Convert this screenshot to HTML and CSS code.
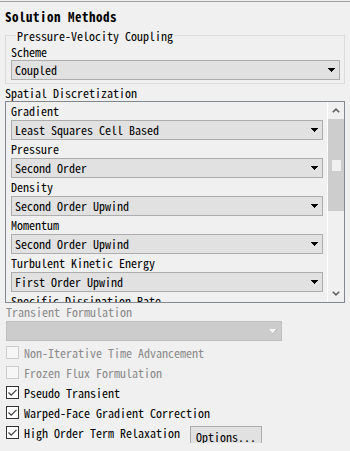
FILE: index.html
```html
<!DOCTYPE html>
<html lang="en">
<head>
<meta charset="UTF-8" />
<title>Solution Methods</title>
<link rel="stylesheet" href="styles.css">
</head>
<body>
<div class="rule"></div>
<div class="title">Solution Methods</div>

<fieldset class="group">
  <legend>Pressure-Velocity Coupling</legend>
  <div class="field-label tight">Scheme</div>
  <div class="combo">
    <span>Coupled</span>
    <svg class="arrow" width="7" height="4" viewBox="0 0 7 4" shape-rendering="crispEdges"><rect x="0" y="0" width="7" height="1"/><rect x="1" y="1" width="5" height="1"/><rect x="2" y="2" width="3" height="1"/><rect x="3" y="3" width="1" height="1"/></svg>
  </div>
</fieldset>

<div class="section-label">Spatial Discretization</div>
<div class="scroll-box">
  <div class="scroll-content">
    <div class="field-label">Gradient</div>
    <div class="combo"><span>Least Squares Cell Based</span><svg class="arrow" width="7" height="4" viewBox="0 0 7 4" shape-rendering="crispEdges"><rect x="0" y="0" width="7" height="1"/><rect x="1" y="1" width="5" height="1"/><rect x="2" y="2" width="3" height="1"/><rect x="3" y="3" width="1" height="1"/></svg></div>
    <div class="field-label">Pressure</div>
    <div class="combo"><span>Second Order</span><svg class="arrow" width="7" height="4" viewBox="0 0 7 4" shape-rendering="crispEdges"><rect x="0" y="0" width="7" height="1"/><rect x="1" y="1" width="5" height="1"/><rect x="2" y="2" width="3" height="1"/><rect x="3" y="3" width="1" height="1"/></svg></div>
    <div class="field-label">Density</div>
    <div class="combo"><span>Second Order Upwind</span><svg class="arrow" width="7" height="4" viewBox="0 0 7 4" shape-rendering="crispEdges"><rect x="0" y="0" width="7" height="1"/><rect x="1" y="1" width="5" height="1"/><rect x="2" y="2" width="3" height="1"/><rect x="3" y="3" width="1" height="1"/></svg></div>
    <div class="field-label">Momentum</div>
    <div class="combo"><span>Second Order Upwind</span><svg class="arrow" width="7" height="4" viewBox="0 0 7 4" shape-rendering="crispEdges"><rect x="0" y="0" width="7" height="1"/><rect x="1" y="1" width="5" height="1"/><rect x="2" y="2" width="3" height="1"/><rect x="3" y="3" width="1" height="1"/></svg></div>
    <div class="field-label">Turbulent Kinetic Energy</div>
    <div class="combo"><span>First Order Upwind</span><svg class="arrow" width="7" height="4" viewBox="0 0 7 4" shape-rendering="crispEdges"><rect x="0" y="0" width="7" height="1"/><rect x="1" y="1" width="5" height="1"/><rect x="2" y="2" width="3" height="1"/><rect x="3" y="3" width="1" height="1"/></svg></div>
    <div class="field-label">Specific Dissipation Rate</div>
    <div class="combo"><span>First Order Upwind</span></div>
  </div>
  <div class="scrollbar">
    <div class="sb-btn">
      <svg width="8" height="5" viewBox="0 0 8 5"><path d="M0.8 4.3 L4 1.2 L7.2 4.3" fill="none" stroke="#606060" stroke-width="1.6"/></svg>
    </div>
    <div class="sb-thumb"><div class="grip"></div></div>
    <div class="sb-track"></div>
    <div class="sb-btn">
      <svg width="8" height="5" viewBox="0 0 8 5"><path d="M0.8 0.7 L4 3.8 L7.2 0.7" fill="none" stroke="#606060" stroke-width="1.6"/></svg>
    </div>
  </div>
</div>

<div class="field-label muted">Transient Formulation</div>
<div class="combo disabled">
  <span></span>
  <svg class="arrow" width="8" height="5" viewBox="0 0 8 5"><path d="M0 0 H8 L4 4.5 Z" fill="#f6f6f6"/><path d="M8 0 L4 4.5" stroke="#a8a8a8" stroke-width="0.8"/></svg>
</div>

<div class="checks">
  <div class="check disabled"><span class="box"></span><span>Non-Iterative Time Advancement</span></div>
  <div class="check disabled"><span class="box"></span><span>Frozen Flux Formulation</span></div>
  <div class="check"><span class="box"><svg width="11" height="11" viewBox="0 0 11 11"><path d="M1.5 5.5 L4.2 8.2 L9.5 2.8" fill="none" stroke="#3c3c3c" stroke-width="1.2"/></svg></span><span>Pseudo Transient</span></div>
  <div class="check"><span class="box"><svg width="11" height="11" viewBox="0 0 11 11"><path d="M1.5 5.5 L4.2 8.2 L9.5 2.8" fill="none" stroke="#3c3c3c" stroke-width="1.2"/></svg></span><span>Warped-Face Gradient Correction</span></div>
  <div class="check"><span class="box"><svg width="11" height="11" viewBox="0 0 11 11"><path d="M1.5 5.5 L4.2 8.2 L9.5 2.8" fill="none" stroke="#3c3c3c" stroke-width="1.2"/></svg></span><span>High Order Term Relaxation</span><button class="options">Options...</button></div>
</div>
</body>
</html>
```

FILE: styles.css
```css
/* base */
body {
  margin: 0;
  background: #f0f0f0;
  color: #000;
  font-family: 'Noto Sans Mono CJK SC', 'Liberation Mono', monospace;
  font-size: 12px;
  overflow: hidden;
}

.rule {
  height: 1px;
  margin-top: 1px;
  background: #a0a0a0;
}

.title {
  margin: 7px 0 0 5px;
  font-weight: bold;
  font-size: 13px;
  letter-spacing: 0.5px;
  line-height: 16px;
}

/* group box */
.group {
  margin: 3px 0 0 5px;
  width: 340px;
  min-width: 0;
  box-sizing: border-box;
  border: 1px solid #dcdcdc;
  padding: 0 4px 3px 5px;
}
.group legend {
  margin-left: 5px;
  padding: 0 1px;
  line-height: 15px;
}

.field-label {
  line-height: 18px;
  white-space: nowrap;
}
.field-label.tight {
  line-height: 17px;
}
.field-label.muted {
  margin-left: 6px;
  color: #8a8a8a;
}

/* combo box */
.combo {
  height: 20px;
  box-sizing: border-box;
  border: 1px solid #adadad;
  background: #e1e1e1;
  display: flex;
  align-items: center;
  justify-content: space-between;
  padding: 0 4px 0 3px;
  line-height: 18px;
  white-space: nowrap;
}
.combo .arrow {
  display: block;
  flex: none;
  fill: #000;
}
.combo.disabled {
  margin-left: 6px;
  width: 276px;
  background: #cccccc;
  border-color: #bfbfbf;
  padding-right: 4px;
}

.section-label {
  margin-left: 5px;
  line-height: 17px;
}

/* scrolling list */
.scroll-box {
  margin-left: 5px;
  width: 340px;
  height: 202px;
  box-sizing: border-box;
  border: 1px solid #828790;
  display: flex;
}
.scroll-content {
  flex: 1;
  overflow: hidden;
  padding: 0 4px 0 5px;
}
.scrollbar {
  width: 17px;
  flex: none;
  box-sizing: border-box;
  border-left: 1px solid #fff;
  display: flex;
  flex-direction: column;
}
.sb-btn {
  height: 17px;
  flex: none;
  display: flex;
  align-items: center;
  justify-content: center;
}
.sb-btn svg {
  display: block;
}
.sb-thumb {
  height: 92px;
  flex: none;
  background: #cdcdcd;
  display: flex;
  align-items: center;
  justify-content: center;
}
.grip {
  width: 9px;
  height: 11px;
  background: #f0f0f0;
}
.sb-track {
  flex: 1;
}

/* checkboxes */
.checks {
  margin: 2px 0 0 6px;
}
.check {
  display: flex;
  align-items: flex-start;
  height: 20px;
  line-height: 20px;
  white-space: nowrap;
}
.check .box {
  width: 13px;
  height: 13px;
  flex: none;
  box-sizing: border-box;
  border: 1px solid #333;
  background: #fff;
  margin: 3px 5px 0 0;
}
.check .box svg {
  display: block;
}
.check.disabled {
  color: #8a8a8a;
}
.check.disabled .box {
  border-color: #cccccc;
  background: #f6f6f6;
}

.options {
  margin: 3px 0 0 10px;
  width: 72px;
  height: 21px;
  box-sizing: border-box;
  border: 1px solid #adadad;
  background: #e1e1e1;
  color: #000;
  font: inherit;
  line-height: 19px;
  padding: 0;
  text-align: center;
}
```
